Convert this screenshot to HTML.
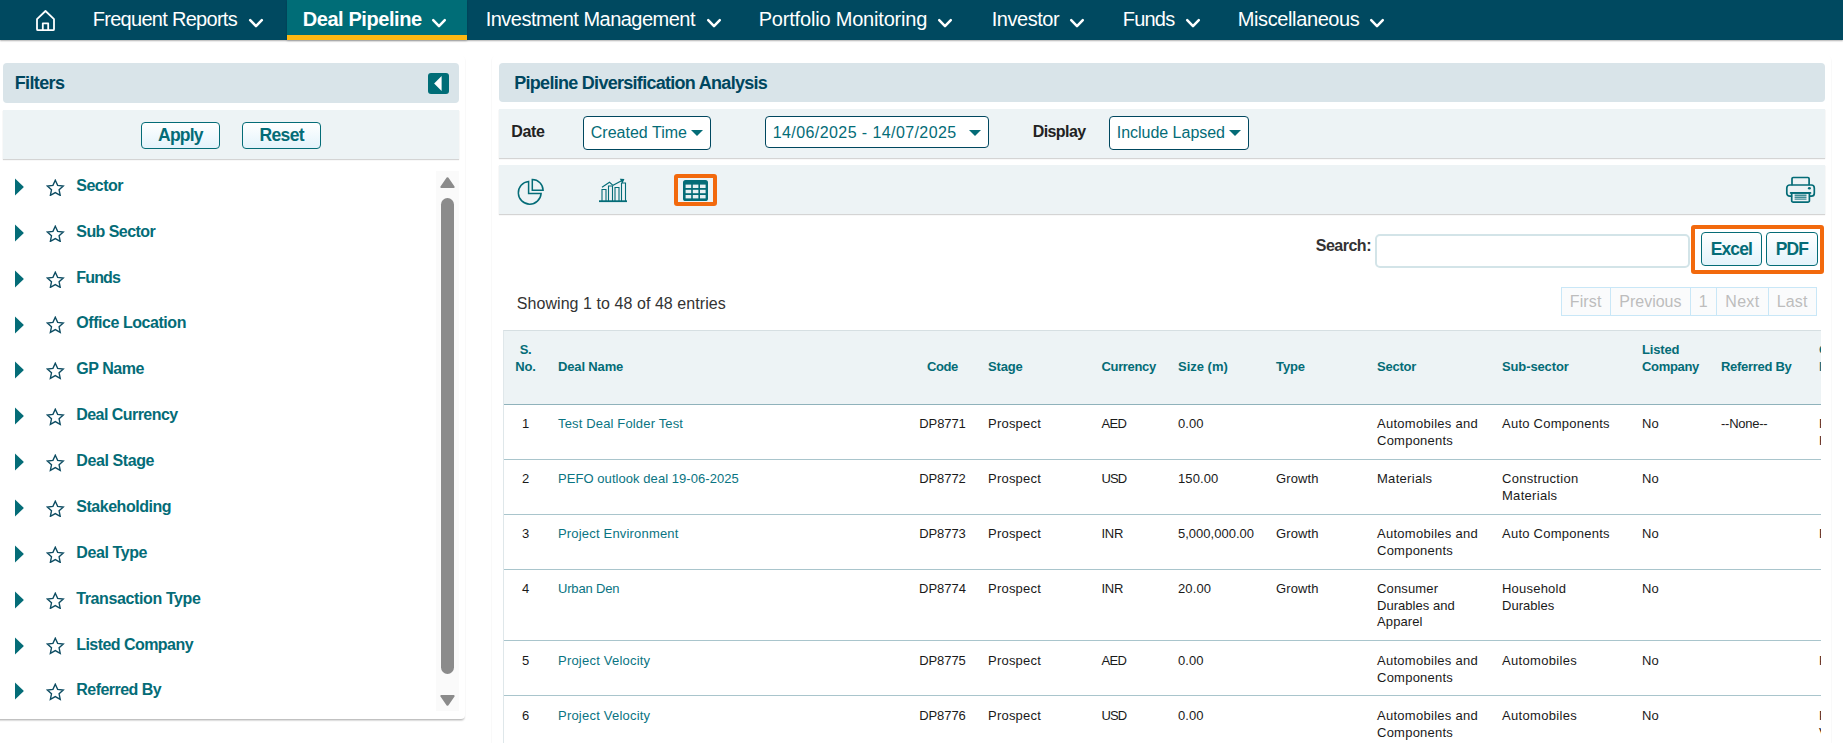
<!DOCTYPE html>
<html lang="en"><head><meta charset="utf-8"><title>Pipeline Diversification Analysis</title>
<style>
html,body{margin:0;padding:0;background:#fff;}
body{width:1843px;height:743px;overflow:hidden;position:relative;font-family:"Liberation Sans", sans-serif;}
.t{position:absolute;white-space:pre;line-height:1;display:block;}
.abs{position:absolute;}
#nav{position:absolute;left:0;top:0;width:1843px;height:40px;background:#004960;box-shadow:0 1px 1.5px rgba(0,0,0,.3);}
#nav .act{position:absolute;left:287px;top:0;width:180px;height:35px;background:#006d77;border-bottom:5px solid #fdb813;box-shadow:0 1px 2px rgba(0,0,0,.2);}
.card{position:absolute;background:#fff;border-radius:4px;box-shadow:0 2px 2px -1px rgba(0,0,0,.26),0 1.2px 1.6px rgba(0,0,0,.07);}
.hdr{position:absolute;background:#d9e4e9;border-radius:4px;}
.bar{position:absolute;background:#edf3f5;box-shadow:0 1px 1px rgba(0,0,0,.17);}
.btn{position:absolute;box-sizing:border-box;border:1px solid #046c77;border-radius:4px;background:linear-gradient(#ffffff,#e3f3fb);}
.sel{position:absolute;box-sizing:border-box;border:1px solid #00475f;border-radius:4px;background:#fff;}
.caret{position:absolute;width:0;height:0;border-left:6px solid transparent;border-right:6px solid transparent;border-top:6px solid #046c77;}
table{border-collapse:collapse;table-layout:fixed;font-size:13px;line-height:17px;color:#1a1a1a;}
th,td{padding:0;text-align:left;vertical-align:top;white-space:nowrap;overflow:visible;letter-spacing:0;}
thead th{background:#edf3f5;color:#046c77;font-weight:700;vertical-align:bottom;height:74px;box-sizing:border-box;padding-bottom:29.3px;border-bottom:1.5px solid #8fb2bb;}
tbody td{padding-top:10px;border-bottom:1px solid #a9c5cc;box-sizing:border-box;}
td a{color:#0a7482;text-decoration:none;}
.c{text-align:center;}
.pg{position:absolute;top:287px;height:29px;box-sizing:border-box;border:1px solid #c9e7f7;background:#fafbfc;}
</style></head><body>

<div id="nav"><div class="act"></div>
<svg class="abs" style="left:34px;top:8px" width="24" height="25" viewBox="0 0 24 25" fill="none" stroke="#fff" stroke-width="1.8" stroke-linejoin="round" stroke-linecap="round"><path d="M3 11.2 L11.5 3 L20 11.2 V21.2 a1 1 0 0 1 -1 1 H4 a1 1 0 0 1 -1 -1 Z"/><path d="M8.8 22 V15.3 H14.2 V22"/></svg>
<span class="t" style="left:92.7px;top:9.00px;font-size:20px;font-weight:400;color:#fff;letter-spacing:-0.709px;">Frequent Reports</span>
<svg class="abs" style="left:247.5px;top:17.8px" width="16" height="11" viewBox="0 0 16 11" fill="none" stroke="#fff" stroke-width="2.5" stroke-linecap="round" stroke-linejoin="round"><path d="M2.2 2.2 L8 8.1 L13.8 2.2"/></svg>
<span class="t" style="left:302.7px;top:9.00px;font-size:20px;font-weight:700;color:#fff;letter-spacing:-0.423px;">Deal Pipeline</span>
<svg class="abs" style="left:431px;top:17.8px" width="16" height="11" viewBox="0 0 16 11" fill="none" stroke="#fff" stroke-width="2.5" stroke-linecap="round" stroke-linejoin="round"><path d="M2.2 2.2 L8 8.1 L13.8 2.2"/></svg>
<span class="t" style="left:485.7px;top:9.00px;font-size:20px;font-weight:400;color:#fff;letter-spacing:-0.515px;">Investment Management</span>
<svg class="abs" style="left:705.5px;top:17.8px" width="16" height="11" viewBox="0 0 16 11" fill="none" stroke="#fff" stroke-width="2.5" stroke-linecap="round" stroke-linejoin="round"><path d="M2.2 2.2 L8 8.1 L13.8 2.2"/></svg>
<span class="t" style="left:758.7px;top:9.00px;font-size:20px;font-weight:400;color:#fff;letter-spacing:-0.191px;">Portfolio Monitoring</span>
<svg class="abs" style="left:937px;top:17.8px" width="16" height="11" viewBox="0 0 16 11" fill="none" stroke="#fff" stroke-width="2.5" stroke-linecap="round" stroke-linejoin="round"><path d="M2.2 2.2 L8 8.1 L13.8 2.2"/></svg>
<span class="t" style="left:991.7px;top:9.00px;font-size:20px;font-weight:400;color:#fff;letter-spacing:-0.457px;">Investor</span>
<svg class="abs" style="left:1069px;top:17.8px" width="16" height="11" viewBox="0 0 16 11" fill="none" stroke="#fff" stroke-width="2.5" stroke-linecap="round" stroke-linejoin="round"><path d="M2.2 2.2 L8 8.1 L13.8 2.2"/></svg>
<span class="t" style="left:1122.7px;top:9.00px;font-size:20px;font-weight:400;color:#fff;letter-spacing:-0.759px;">Funds</span>
<svg class="abs" style="left:1185px;top:17.8px" width="16" height="11" viewBox="0 0 16 11" fill="none" stroke="#fff" stroke-width="2.5" stroke-linecap="round" stroke-linejoin="round"><path d="M2.2 2.2 L8 8.1 L13.8 2.2"/></svg>
<span class="t" style="left:1237.7px;top:9.00px;font-size:20px;font-weight:400;color:#fff;letter-spacing:-0.38px;">Miscellaneous</span>
<svg class="abs" style="left:1369px;top:17.8px" width="16" height="11" viewBox="0 0 16 11" fill="none" stroke="#fff" stroke-width="2.5" stroke-linecap="round" stroke-linejoin="round"><path d="M2.2 2.2 L8 8.1 L13.8 2.2"/></svg>
</div>
<div class="card" style="left:-8px;top:56px;width:472.8px;height:662.7px;"></div>
<div class="card" style="left:491.5px;top:56px;width:1339px;height:800px;"></div>
<div class="hdr" style="left:3px;top:63px;width:456px;height:39.5px;"></div>
<span class="t" style="left:14.73px;top:74.00px;font-size:18px;font-weight:700;color:#00475f;letter-spacing:-0.637px;">Filters</span>
<div class="abs" style="left:428px;top:73px;width:21px;height:21px;border-radius:3px;background:#006d77;"><svg width="21" height="21" viewBox="0 0 21 21"><path d="M13.6 3 L6.1 10.5 L13.6 18 Z" fill="#fff"/></svg></div>
<div class="bar" style="left:3px;top:110px;width:456px;height:49px;"></div>
<div class="btn" style="left:141px;top:122px;width:79px;height:27px;"></div>
<span class="t" style="left:158.04px;top:127.00px;font-size:17.5px;font-weight:700;color:#046c77;letter-spacing:-0.792px;">Apply</span>
<div class="btn" style="left:242px;top:122px;width:79px;height:27px;"></div>
<span class="t" style="left:259.44px;top:127.00px;font-size:17.5px;font-weight:700;color:#046c77;letter-spacing:-0.602px;">Reset</span>
<svg class="abs" style="left:14px;top:178.0px" width="11" height="18" viewBox="0 0 11 18"><path d="M1 0.5 L9.9 9 L1 17.5 Z" fill="#046c77"/></svg>
<svg class="abs" style="left:46.3px;top:178.8px" width="18.6" height="17.7" viewBox="0 0 20 19" fill="none" stroke="#0e4d63" stroke-width="1.5" stroke-linejoin="miter"><path d="M10.00 1.30 L12.53 6.82 L18.56 7.52 L14.09 11.63 L15.29 17.58 L10.00 14.60 L4.71 17.58 L5.91 11.63 L1.44 7.52 L7.47 6.82 Z"/></svg>
<span class="t" style="left:76.26px;top:178.00px;font-size:16px;font-weight:700;color:#046c77;letter-spacing:-0.509px;">Sector</span>
<svg class="abs" style="left:14px;top:223.8px" width="11" height="18" viewBox="0 0 11 18"><path d="M1 0.5 L9.9 9 L1 17.5 Z" fill="#046c77"/></svg>
<svg class="abs" style="left:46.3px;top:224.7px" width="18.6" height="17.7" viewBox="0 0 20 19" fill="none" stroke="#0e4d63" stroke-width="1.5" stroke-linejoin="miter"><path d="M10.00 1.30 L12.53 6.82 L18.56 7.52 L14.09 11.63 L15.29 17.58 L10.00 14.60 L4.71 17.58 L5.91 11.63 L1.44 7.52 L7.47 6.82 Z"/></svg>
<span class="t" style="left:76.26px;top:224.00px;font-size:16px;font-weight:700;color:#046c77;letter-spacing:-0.543px;">Sub Sector</span>
<svg class="abs" style="left:14px;top:269.7px" width="11" height="18" viewBox="0 0 11 18"><path d="M1 0.5 L9.9 9 L1 17.5 Z" fill="#046c77"/></svg>
<svg class="abs" style="left:46.3px;top:270.5px" width="18.6" height="17.7" viewBox="0 0 20 19" fill="none" stroke="#0e4d63" stroke-width="1.5" stroke-linejoin="miter"><path d="M10.00 1.30 L12.53 6.82 L18.56 7.52 L14.09 11.63 L15.29 17.58 L10.00 14.60 L4.71 17.58 L5.91 11.63 L1.44 7.52 L7.47 6.82 Z"/></svg>
<span class="t" style="left:76.26px;top:270.00px;font-size:16px;font-weight:700;color:#046c77;letter-spacing:-0.832px;">Funds</span>
<svg class="abs" style="left:14px;top:315.6px" width="11" height="18" viewBox="0 0 11 18"><path d="M1 0.5 L9.9 9 L1 17.5 Z" fill="#046c77"/></svg>
<svg class="abs" style="left:46.3px;top:316.4px" width="18.6" height="17.7" viewBox="0 0 20 19" fill="none" stroke="#0e4d63" stroke-width="1.5" stroke-linejoin="miter"><path d="M10.00 1.30 L12.53 6.82 L18.56 7.52 L14.09 11.63 L15.29 17.58 L10.00 14.60 L4.71 17.58 L5.91 11.63 L1.44 7.52 L7.47 6.82 Z"/></svg>
<span class="t" style="left:76.26px;top:315.00px;font-size:16px;font-weight:700;color:#046c77;letter-spacing:-0.448px;">Office Location</span>
<svg class="abs" style="left:14px;top:361.4px" width="11" height="18" viewBox="0 0 11 18"><path d="M1 0.5 L9.9 9 L1 17.5 Z" fill="#046c77"/></svg>
<svg class="abs" style="left:46.3px;top:362.2px" width="18.6" height="17.7" viewBox="0 0 20 19" fill="none" stroke="#0e4d63" stroke-width="1.5" stroke-linejoin="miter"><path d="M10.00 1.30 L12.53 6.82 L18.56 7.52 L14.09 11.63 L15.29 17.58 L10.00 14.60 L4.71 17.58 L5.91 11.63 L1.44 7.52 L7.47 6.82 Z"/></svg>
<span class="t" style="left:76.26px;top:361.00px;font-size:16px;font-weight:700;color:#046c77;letter-spacing:-0.446px;">GP Name</span>
<svg class="abs" style="left:14px;top:407.2px" width="11" height="18" viewBox="0 0 11 18"><path d="M1 0.5 L9.9 9 L1 17.5 Z" fill="#046c77"/></svg>
<svg class="abs" style="left:46.3px;top:408.1px" width="18.6" height="17.7" viewBox="0 0 20 19" fill="none" stroke="#0e4d63" stroke-width="1.5" stroke-linejoin="miter"><path d="M10.00 1.30 L12.53 6.82 L18.56 7.52 L14.09 11.63 L15.29 17.58 L10.00 14.60 L4.71 17.58 L5.91 11.63 L1.44 7.52 L7.47 6.82 Z"/></svg>
<span class="t" style="left:76.26px;top:407.00px;font-size:16px;font-weight:700;color:#046c77;letter-spacing:-0.551px;">Deal Currency</span>
<svg class="abs" style="left:14px;top:453.1px" width="11" height="18" viewBox="0 0 11 18"><path d="M1 0.5 L9.9 9 L1 17.5 Z" fill="#046c77"/></svg>
<svg class="abs" style="left:46.3px;top:453.9px" width="18.6" height="17.7" viewBox="0 0 20 19" fill="none" stroke="#0e4d63" stroke-width="1.5" stroke-linejoin="miter"><path d="M10.00 1.30 L12.53 6.82 L18.56 7.52 L14.09 11.63 L15.29 17.58 L10.00 14.60 L4.71 17.58 L5.91 11.63 L1.44 7.52 L7.47 6.82 Z"/></svg>
<span class="t" style="left:76.26px;top:453.00px;font-size:16px;font-weight:700;color:#046c77;letter-spacing:-0.407px;">Deal Stage</span>
<svg class="abs" style="left:14px;top:498.9px" width="11" height="18" viewBox="0 0 11 18"><path d="M1 0.5 L9.9 9 L1 17.5 Z" fill="#046c77"/></svg>
<svg class="abs" style="left:46.3px;top:499.8px" width="18.6" height="17.7" viewBox="0 0 20 19" fill="none" stroke="#0e4d63" stroke-width="1.5" stroke-linejoin="miter"><path d="M10.00 1.30 L12.53 6.82 L18.56 7.52 L14.09 11.63 L15.29 17.58 L10.00 14.60 L4.71 17.58 L5.91 11.63 L1.44 7.52 L7.47 6.82 Z"/></svg>
<span class="t" style="left:76.26px;top:499.00px;font-size:16px;font-weight:700;color:#046c77;letter-spacing:-0.468px;">Stakeholding</span>
<svg class="abs" style="left:14px;top:544.8px" width="11" height="18" viewBox="0 0 11 18"><path d="M1 0.5 L9.9 9 L1 17.5 Z" fill="#046c77"/></svg>
<svg class="abs" style="left:46.3px;top:545.6px" width="18.6" height="17.7" viewBox="0 0 20 19" fill="none" stroke="#0e4d63" stroke-width="1.5" stroke-linejoin="miter"><path d="M10.00 1.30 L12.53 6.82 L18.56 7.52 L14.09 11.63 L15.29 17.58 L10.00 14.60 L4.71 17.58 L5.91 11.63 L1.44 7.52 L7.47 6.82 Z"/></svg>
<span class="t" style="left:76.26px;top:545.00px;font-size:16px;font-weight:700;color:#046c77;letter-spacing:-0.407px;">Deal Type</span>
<svg class="abs" style="left:14px;top:590.7px" width="11" height="18" viewBox="0 0 11 18"><path d="M1 0.5 L9.9 9 L1 17.5 Z" fill="#046c77"/></svg>
<svg class="abs" style="left:46.3px;top:591.5px" width="18.6" height="17.7" viewBox="0 0 20 19" fill="none" stroke="#0e4d63" stroke-width="1.5" stroke-linejoin="miter"><path d="M10.00 1.30 L12.53 6.82 L18.56 7.52 L14.09 11.63 L15.29 17.58 L10.00 14.60 L4.71 17.58 L5.91 11.63 L1.44 7.52 L7.47 6.82 Z"/></svg>
<span class="t" style="left:76.26px;top:591.00px;font-size:16px;font-weight:700;color:#046c77;letter-spacing:-0.385px;">Transaction Type</span>
<svg class="abs" style="left:14px;top:636.5px" width="11" height="18" viewBox="0 0 11 18"><path d="M1 0.5 L9.9 9 L1 17.5 Z" fill="#046c77"/></svg>
<svg class="abs" style="left:46.3px;top:637.3px" width="18.6" height="17.7" viewBox="0 0 20 19" fill="none" stroke="#0e4d63" stroke-width="1.5" stroke-linejoin="miter"><path d="M10.00 1.30 L12.53 6.82 L18.56 7.52 L14.09 11.63 L15.29 17.58 L10.00 14.60 L4.71 17.58 L5.91 11.63 L1.44 7.52 L7.47 6.82 Z"/></svg>
<span class="t" style="left:76.26px;top:637.00px;font-size:16px;font-weight:700;color:#046c77;letter-spacing:-0.552px;">Listed Company</span>
<svg class="abs" style="left:14px;top:682.4px" width="11" height="18" viewBox="0 0 11 18"><path d="M1 0.5 L9.9 9 L1 17.5 Z" fill="#046c77"/></svg>
<svg class="abs" style="left:46.3px;top:683.1px" width="18.6" height="17.7" viewBox="0 0 20 19" fill="none" stroke="#0e4d63" stroke-width="1.5" stroke-linejoin="miter"><path d="M10.00 1.30 L12.53 6.82 L18.56 7.52 L14.09 11.63 L15.29 17.58 L10.00 14.60 L4.71 17.58 L5.91 11.63 L1.44 7.52 L7.47 6.82 Z"/></svg>
<span class="t" style="left:76.26px;top:682.00px;font-size:16px;font-weight:700;color:#046c77;letter-spacing:-0.524px;">Referred By</span>
<div class="abs" style="left:436px;top:171px;width:23px;height:540px;background:#fafafa;"></div>
<svg class="abs" style="left:439px;top:176px" width="17" height="13" viewBox="0 0 17 13"><path d="M8.5 2.2 L14.7 11 H2.3 Z" fill="#8b8b8b" stroke="#8b8b8b" stroke-width="2" stroke-linejoin="round"/></svg>
<div class="abs" style="left:441px;top:198px;width:13px;height:476px;border-radius:6.5px;background:#8b8b8b;"></div>
<svg class="abs" style="left:439px;top:693.6px" width="17" height="13" viewBox="0 0 17 13"><path d="M8.5 10.8 L14.7 2 H2.3 Z" fill="#8b8b8b" stroke="#8b8b8b" stroke-width="2" stroke-linejoin="round"/></svg>
<div class="hdr" style="left:499px;top:63px;width:1326px;height:38.8px;"></div>
<span class="t" style="left:514.23px;top:74.00px;font-size:18px;font-weight:700;color:#00475f;letter-spacing:-0.714px;">Pipeline Diversification Analysis</span>
<div class="bar" style="left:499px;top:109px;width:1326px;height:49px;"></div>
<span class="t" style="left:511.26px;top:124.00px;font-size:16px;font-weight:700;color:#222;letter-spacing:-0.312px;">Date</span>
<div class="sel" style="left:583px;top:116px;width:128px;height:34px;"></div>
<span class="t" style="left:590.76px;top:125.00px;font-size:16px;font-weight:400;color:#046c77;letter-spacing:0.016px;">Created Time</span>
<div class="caret" style="left:691px;top:130px"></div>
<div class="sel" style="left:765px;top:116px;width:224px;height:32px;"></div>
<span class="t" style="left:772.76px;top:125.00px;font-size:16px;font-weight:400;color:#046c77;letter-spacing:0.412px;">14/06/2025 - 14/07/2025</span>
<div class="caret" style="left:969px;top:130px"></div>
<span class="t" style="left:1032.76px;top:124.00px;font-size:16px;font-weight:700;color:#222;letter-spacing:-0.597px;">Display</span>
<div class="sel" style="left:1109px;top:116px;width:140px;height:34px;"></div>
<span class="t" style="left:1116.76px;top:125.00px;font-size:16px;font-weight:400;color:#046c77;letter-spacing:-0.021px;">Include Lapsed</span>
<div class="caret" style="left:1229px;top:130px"></div>
<div class="bar" style="left:499px;top:165px;width:1326px;height:49px;"></div>
<svg class="abs" style="left:515px;top:176px" width="32" height="32" viewBox="515 176 32 32" fill="none" stroke="#046c77" stroke-width="1.5" stroke-linejoin="miter"><path d="M528.6 181.4 A11.4 11.4 0 1 0 541.1 193.6 H528.6 Z"/><path d="M532.3 179.5 A10.8 10.8 0 0 1 543.1 190.3 H532.3 Z"/></svg>
<svg class="abs" style="left:597px;top:176px" width="32" height="28" viewBox="0 0 32 28" fill="none" stroke="#046c77" stroke-width="1.1"><path d="M2 25.2 H30" stroke-width="1.8"/><path d="M5 25 V13.5 H9 V25 M11.5 25 V10 H15.5 V25 M18 25 V11.5 H22 V25 M24.5 25 V7 H28.5 V25"/><path d="M5 11.3 L12.5 6.3 L16 9.3 L26 4"/><path d="M23.8 3.4 L26.6 3.6 L25.4 6.2 Z" fill="#046c77"/></svg>
<div class="abs" style="left:673.8px;top:173.7px;width:43.4px;height:32.5px;box-sizing:border-box;border:4px solid #f2690d;border-radius:3px;"></div>
<svg class="abs" style="left:683px;top:180px" width="25" height="21" viewBox="0 0 25 21"><rect x="0" y="0" width="25" height="21" rx="2.6" fill="#046c77"/><g fill="#e8f1f3"><rect x="2.6" y="4.6" width="5.6" height="3.4"/><rect x="9.8" y="4.6" width="5.6" height="3.4"/><rect x="17" y="4.6" width="5.6" height="3.4"/><rect x="2.6" y="9.8" width="5.6" height="3.4"/><rect x="9.8" y="9.8" width="5.6" height="3.4"/><rect x="17" y="9.8" width="5.6" height="3.4"/><rect x="2.6" y="15" width="5.6" height="3.4"/><rect x="9.8" y="15" width="5.6" height="3.4"/><rect x="17" y="15" width="5.6" height="3.4"/></g></svg>
<svg class="abs" style="left:1785px;top:175px" width="32" height="30" viewBox="0 0 32 30" fill="none" stroke="#046c77" stroke-width="1.7" stroke-linejoin="round" stroke-linecap="round"><path d="M7 9.6 V3.7 a1.2 1.2 0 0 1 1.2 -1.2 H22.9 a1.2 1.2 0 0 1 1.2 1.2 V9.6"/><path d="M6.4 21.2 H4.8 a3 3 0 0 1 -3 -3 V13 a3 3 0 0 1 3 -3 H26.3 a3 3 0 0 1 3 3 V18.2 a3 3 0 0 1 -3 3 H24.7"/><path d="M6.7 17.9 H24.4 V25.7 a1.5 1.5 0 0 1 -1.5 1.5 H8.2 a1.5 1.5 0 0 1 -1.5 -1.5 Z"/><path d="M5.6 17.9 H25.5"/><path d="M9.6 20.3 H21.5 M9.6 22.2 H21.5 M9.6 24.1 H21.5" stroke-width="1.4" stroke="#3f8c95" stroke-linecap="butt"/><ellipse cx="24.4" cy="13.3" rx="1.5" ry="1.2" fill="#046c77" stroke="none"/></svg>
<span class="t" style="left:1315.76px;top:238.00px;font-size:16px;font-weight:700;color:#333;letter-spacing:-0.495px;">Search:</span>
<div class="abs" style="left:1375px;top:234px;width:315px;height:34px;box-sizing:border-box;border:2px solid #d3e4e8;border-radius:5px;background:#fff;"></div>
<div class="abs" style="left:1690.6px;top:224.6px;width:133.5px;height:49.3px;box-sizing:border-box;border:4px solid #f2690d;border-radius:3px;"></div>
<div class="btn" style="left:1701px;top:232px;width:61px;height:34px;"></div>
<span class="t" style="left:1710.74px;top:241.00px;font-size:17.5px;font-weight:700;color:#046c77;letter-spacing:-0.894px;">Excel</span>
<div class="btn" style="left:1766px;top:232px;width:52px;height:34px;"></div>
<span class="t" style="left:1775.74px;top:241.00px;font-size:17.5px;font-weight:700;color:#046c77;letter-spacing:-0.912px;">PDF</span>
<span class="t" style="left:516.76px;top:296.00px;font-size:16px;font-weight:400;color:#333;letter-spacing:0.062px;">Showing 1 to 48 of 48 entries</span>
<div class="pg" style="left:1561px;width:50px;"></div>
<span class="t" style="left:1569.76px;top:294.00px;font-size:16px;font-weight:400;color:#bdbdbd;letter-spacing:0.126px;">First</span>
<div class="pg" style="left:1610px;width:81px;"></div>
<span class="t" style="left:1619.26px;top:294.00px;font-size:16px;font-weight:400;color:#bdbdbd;letter-spacing:-0.001px;">Previous</span>
<div class="pg" style="left:1690px;width:27px;"></div>
<span class="t" style="left:1698.76px;top:294.00px;font-size:16px;font-weight:400;color:#bdbdbd;letter-spacing:-0.666px;">1</span>
<div class="pg" style="left:1716px;width:53px;"></div>
<span class="t" style="left:1725.26px;top:294.00px;font-size:16px;font-weight:400;color:#bdbdbd;letter-spacing:0.333px;">Next</span>
<div class="pg" style="left:1768px;width:49px;"></div>
<span class="t" style="left:1776.76px;top:294.00px;font-size:16px;font-weight:400;color:#bdbdbd;letter-spacing:0.122px;">Last</span>
<div class="abs" style="left:503px;top:330px;width:1318px;height:414px;overflow:hidden;border-left:1px solid #dfe7ea;box-sizing:border-box;border-top:1px solid #d6dfe2;">
<table style="width:1394.0px;margin-top:-0.7px"><colgroup><col style="width:43px"><col style="width:361px"><col style="width:69px"><col style="width:113.5px"><col style="width:76.5px"><col style="width:98px"><col style="width:101px"><col style="width:125px"><col style="width:140px"><col style="width:79px"><col style="width:98px"><col style="width:90px"></colgroup><thead><tr>
<th class="c" style="padding-left:0px"><span style="letter-spacing:-0.298px;">S.</span><br><span style="letter-spacing:-0.184px;">No.</span></th>
<th class="" style="padding-left:11px"><span style="letter-spacing:-0.143px;">Deal Name</span></th>
<th class="c" style="padding-left:0px"><span style="letter-spacing:-0.4px;">Code</span></th>
<th class="" style="padding-left:11px"><span style="letter-spacing:-0.141px;">Stage</span></th>
<th class="" style="padding-left:11px"><span style="letter-spacing:-0.347px;">Currency</span></th>
<th class="" style="padding-left:11px"><span style="letter-spacing:-0.005px;">Size (m)</span></th>
<th class="" style="padding-left:11px"><span style="letter-spacing:-0.098px;">Type</span></th>
<th class="" style="padding-left:11px"><span style="letter-spacing:-0.211px;">Sector</span></th>
<th class="" style="padding-left:11px"><span style="letter-spacing:-0.121px;">Sub-sector</span></th>
<th class="" style="padding-left:11px"><span style="letter-spacing:-0.166px;">Listed</span><br><span style="letter-spacing:-0.333px;">Company</span></th>
<th class="" style="padding-left:11px"><span style="letter-spacing:-0.291px;">Referred By</span></th>
<th class="" style="padding-left:11px">Created<br>By</th>
</tr></thead><tbody>
<tr style="height:55px">
<td class="c" style="padding-left:0px;">1</td>
<td class="" style="padding-left:11px;"><a><span style="letter-spacing:0.154px;">Test Deal Folder Test</span></a></td>
<td class="c" style="padding-left:0px;"><span style="letter-spacing:-0.097px;">DP8771</span></td>
<td class="" style="padding-left:11px;"><span style="letter-spacing:0.223px;">Prospect</span></td>
<td class="" style="padding-left:11px;"><span style="letter-spacing:-0.611px;">AED</span></td>
<td class="" style="padding-left:11px;"><span style="letter-spacing:0.072px;">0.00</span></td>
<td class="" style="padding-left:11px;"></td>
<td class="" style="padding-left:11px;"><span style="letter-spacing:0.277px;">Automobiles and</span><br><span style="letter-spacing:0.238px;">Components</span></td>
<td class="" style="padding-left:11px;"><span style="letter-spacing:0.248px;">Auto Components</span></td>
<td class="" style="padding-left:11px;"><span style="letter-spacing:0.188px;">No</span></td>
<td class="" style="padding-left:11px;"><span style="letter-spacing:-0.251px;">--None--</span></td>
<td class="" style="padding-left:11px;">Piyush<br>Kumar</td>
</tr>
<tr style="height:55px">
<td class="c" style="padding-left:0px;">2</td>
<td class="" style="padding-left:11px;"><a><span style="letter-spacing:0.059px;">PEFO outlook deal 19-06-2025</span></a></td>
<td class="c" style="padding-left:0px;"><span style="letter-spacing:-0.064px;">DP8772</span></td>
<td class="" style="padding-left:11px;"><span style="letter-spacing:0.223px;">Prospect</span></td>
<td class="" style="padding-left:11px;"><span style="letter-spacing:-0.851px;">USD</span></td>
<td class="" style="padding-left:11px;"><span style="letter-spacing:0.089px;">150.00</span></td>
<td class="" style="padding-left:11px;"><span style="letter-spacing:0.116px;">Growth</span></td>
<td class="" style="padding-left:11px;"><span style="letter-spacing:0.294px;">Materials</span></td>
<td class="" style="padding-left:11px;"><span style="letter-spacing:0.293px;">Construction</span><br><span style="letter-spacing:0.294px;">Materials</span></td>
<td class="" style="padding-left:11px;"><span style="letter-spacing:0.188px;">No</span></td>
<td class="" style="padding-left:11px;"></td>
<td class="" style="padding-left:11px;"></td>
</tr>
<tr style="height:55px">
<td class="c" style="padding-left:0px;">3</td>
<td class="" style="padding-left:11px;"><a><span style="letter-spacing:0.186px;">Project Environment</span></a></td>
<td class="c" style="padding-left:0px;"><span style="letter-spacing:-0.064px;">DP8773</span></td>
<td class="" style="padding-left:11px;"><span style="letter-spacing:0.223px;">Prospect</span></td>
<td class="" style="padding-left:11px;"><span style="letter-spacing:-0.297px;">INR</span></td>
<td class="" style="padding-left:11px;"><span style="letter-spacing:0.016px;">5,000,000.00</span></td>
<td class="" style="padding-left:11px;"><span style="letter-spacing:0.116px;">Growth</span></td>
<td class="" style="padding-left:11px;"><span style="letter-spacing:0.277px;">Automobiles and</span><br><span style="letter-spacing:0.238px;">Components</span></td>
<td class="" style="padding-left:11px;"><span style="letter-spacing:0.248px;">Auto Components</span></td>
<td class="" style="padding-left:11px;"><span style="letter-spacing:0.188px;">No</span></td>
<td class="" style="padding-left:11px;"></td>
<td class="" style="padding-left:11px;">Piyush</td>
</tr>
<tr style="height:71px">
<td class="c" style="padding-left:0px;">4</td>
<td class="" style="padding-left:11px;"><a><span style="letter-spacing:-0.175px;">Urban Den</span></a></td>
<td class="c" style="padding-left:0px;"><span style="letter-spacing:-0.031px;">DP8774</span></td>
<td class="" style="padding-left:11px;"><span style="letter-spacing:0.223px;">Prospect</span></td>
<td class="" style="padding-left:11px;"><span style="letter-spacing:-0.297px;">INR</span></td>
<td class="" style="padding-left:11px;"><span style="letter-spacing:0.131px;">20.00</span></td>
<td class="" style="padding-left:11px;"><span style="letter-spacing:0.116px;">Growth</span></td>
<td class="" style="padding-left:11px;"><span style="letter-spacing:0.154px;">Consumer</span><br><span style="letter-spacing:0.039px;">Durables and</span><br><span style="letter-spacing:0.113px;position:relative;top:-1px;">Apparel</span></td>
<td class="" style="padding-left:11px;"><span style="letter-spacing:0.216px;">Household</span><br><span style="letter-spacing:0.034px;">Durables</span></td>
<td class="" style="padding-left:11px;"><span style="letter-spacing:0.188px;">No</span></td>
<td class="" style="padding-left:11px;"></td>
<td class="" style="padding-left:11px;"></td>
</tr>
<tr style="height:55px">
<td class="c" style="padding-left:0px;padding-top:11.4px;">5</td>
<td class="" style="padding-left:11px;padding-top:11.4px;"><a><span style="letter-spacing:0.214px;">Project Velocity</span></a></td>
<td class="c" style="padding-left:0px;padding-top:11.4px;"><span style="letter-spacing:-0.064px;">DP8775</span></td>
<td class="" style="padding-left:11px;padding-top:11.4px;"><span style="letter-spacing:0.223px;">Prospect</span></td>
<td class="" style="padding-left:11px;padding-top:11.4px;"><span style="letter-spacing:-0.611px;">AED</span></td>
<td class="" style="padding-left:11px;padding-top:11.4px;"><span style="letter-spacing:0.072px;">0.00</span></td>
<td class="" style="padding-left:11px;padding-top:11.4px;"></td>
<td class="" style="padding-left:11px;padding-top:11.4px;"><span style="letter-spacing:0.277px;">Automobiles and</span><br><span style="letter-spacing:0.238px;">Components</span></td>
<td class="" style="padding-left:11px;padding-top:11.4px;"><span style="letter-spacing:0.332px;">Automobiles</span></td>
<td class="" style="padding-left:11px;padding-top:11.4px;"><span style="letter-spacing:0.188px;">No</span></td>
<td class="" style="padding-left:11px;padding-top:11.4px;"></td>
<td class="" style="padding-left:11px;padding-top:11.4px;">Piyush</td>
</tr>
<tr style="height:55px">
<td class="c" style="padding-left:0px;padding-top:11.4px;">6</td>
<td class="" style="padding-left:11px;padding-top:11.4px;"><a><span style="letter-spacing:0.214px;">Project Velocity</span></a></td>
<td class="c" style="padding-left:0px;padding-top:11.4px;"><span style="letter-spacing:-0.064px;">DP8776</span></td>
<td class="" style="padding-left:11px;padding-top:11.4px;"><span style="letter-spacing:0.223px;">Prospect</span></td>
<td class="" style="padding-left:11px;padding-top:11.4px;"><span style="letter-spacing:-0.851px;">USD</span></td>
<td class="" style="padding-left:11px;padding-top:11.4px;"><span style="letter-spacing:0.072px;">0.00</span></td>
<td class="" style="padding-left:11px;padding-top:11.4px;"></td>
<td class="" style="padding-left:11px;padding-top:11.4px;"><span style="letter-spacing:0.277px;">Automobiles and</span><br><span style="letter-spacing:0.238px;">Components</span></td>
<td class="" style="padding-left:11px;padding-top:11.4px;"><span style="letter-spacing:0.332px;">Automobiles</span></td>
<td class="" style="padding-left:11px;padding-top:11.4px;"><span style="letter-spacing:0.188px;">No</span></td>
<td class="" style="padding-left:11px;padding-top:11.4px;"></td>
<td class="" style="padding-left:11px;padding-top:11.4px;">Piyush<br>Verma</td>
</tr>
</tbody></table></div>
</body></html>
